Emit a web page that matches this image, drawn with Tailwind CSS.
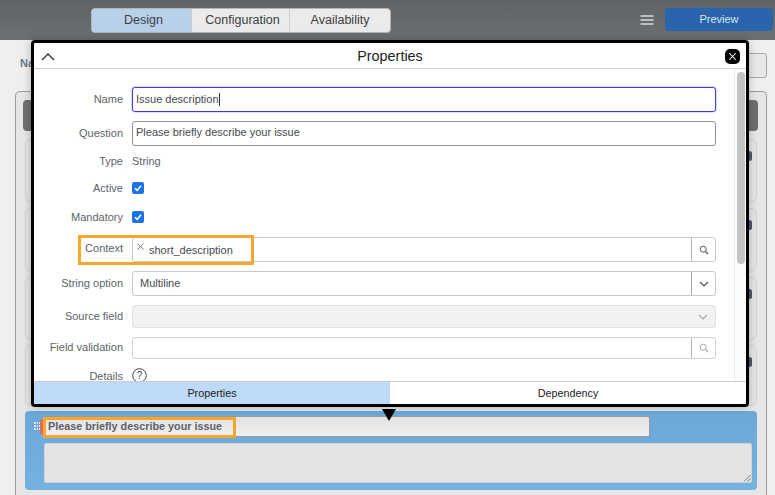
<!DOCTYPE html>
<html>
  <head>
    <meta charset="UTF-8" />
    <meta name="viewport" content="width=device-width, initial-scale=1.0" />
    <title>Properties</title>
    <script src="https://cdn.jsdelivr.net/npm/@tailwindcss/browser@4"></script>
  </head>
  <body class="relative w-[775px] h-[495px] overflow-hidden bg-[#efefef] font-['Liberation_Sans',Arial,sans-serif]">
    <!-- top bar -->
    <header class="relative h-[40px] bg-linear-to-b from-[#5f6365] to-[#6c7072] flex items-start">
      <div class="ml-[91px] mt-[8px] w-[300px] h-[25px] flex rounded-[4px] overflow-hidden border border-[#b5b5b5] text-[12.5px] text-[#3c4043] bg-[#ebebeb]">
        <div class="w-[99px] bg-[#b8d0ea] flex items-center justify-center pl-[4px]">Design</div>
        <div class="w-[99px] border-x border-[#cccccc] flex items-center justify-center pl-[4px]">Configuration</div>
        <div class="flex-1 flex items-center justify-center">Availability</div>
      </div>
      <svg class="ml-[249px] mt-[15px]" width="14" height="10" viewBox="0 0 14 10" fill="none" stroke="#d8dadb" stroke-width="1.4">
        <path d="M0.5 1H13.5M0.5 5H13.5M0.5 9H13.5" />
      </svg>
      <button type="button" class="ml-[11px] mt-[8px] w-[108px] h-[23px] rounded-[4px] bg-[#2a64ad] text-[#d9e4f2] text-[11px] font-medium">Preview</button>
    </header>

    <!-- form page behind the modal -->
    <main class="pl-[15px] pr-[8px] pt-[13px] h-[455px] flex flex-col">
      <div class="h-[25px] ml-[5px] text-[11px] font-bold text-[#6d7780] leading-[21px] flex justify-between">
        <span>Na</span>
        <div class="w-[32px] h-[25px] rounded-[3px] border border-[#a8a8a8] bg-[#e8e8e8]"></div>
      </div>
      <div class="mt-[13px] flex-1 rounded-t-[5px] border border-b-0 border-[#9c9c9c] bg-[#e6e6e6] px-[9px] pt-[8px] flex flex-col">
        <div class="h-[31px] -ml-[2px] -mr-[1px] rounded-[4px] bg-[#6d6f71]"></div>
        <div class="mt-[8px] h-[63px] rounded-[6px] border border-[#d2d2d2] relative"><span class="absolute right-[4px] top-[11px] w-[5px] h-[10px] rounded-full bg-[#4c5662]"></span></div>
        <div class="mt-[6px] h-[63px] rounded-[6px] border border-[#d2d2d2] relative"><span class="absolute right-[4px] top-[11px] w-[5px] h-[10px] rounded-full bg-[#4c5662]"></span></div>
        <div class="mt-[6px] h-[63px] rounded-[6px] border border-[#d2d2d2] relative"><span class="absolute right-[4px] top-[11px] w-[5px] h-[10px] rounded-full bg-[#4c5662]"></span></div>
        <div class="mt-[5px] h-[61px] rounded-[6px] border border-[#d2d2d2] relative"><span class="absolute right-[4px] top-[11px] w-[5px] h-[10px] rounded-full bg-[#4c5662]"></span></div>
        <!-- selected question -->
        <div class="relative mt-[5px] h-[79px] rounded-[4px] bg-linear-to-b from-[#6ba8d8] to-[#74b2e2] pl-[19px] pt-[5px]">
          <div class="absolute left-[9px] top-[11px] grid grid-cols-3 gap-[1px]">
            <i class="w-[1.5px] h-[2px] bg-[#d5e6f5]"></i><i class="w-[1.5px] h-[2px] bg-[#d5e6f5]"></i><i class="w-[1.5px] h-[2px] bg-[#d5e6f5]"></i>
            <i class="w-[1.5px] h-[2px] bg-[#d5e6f5]"></i><i class="w-[1.5px] h-[2px] bg-[#d5e6f5]"></i><i class="w-[1.5px] h-[2px] bg-[#d5e6f5]"></i>
            <i class="w-[1.5px] h-[2px] bg-[#d5e6f5]"></i><i class="w-[1.5px] h-[2px] bg-[#d5e6f5]"></i><i class="w-[1.5px] h-[2px] bg-[#d5e6f5]"></i>
          </div>
          <span class="absolute left-[15px] top-[9px] w-[3px] h-[14px] bg-[#e0685c]"></span>
          <div class="w-[606px] h-[21px] rounded-[2px] border border-[#9a9a9a] bg-linear-to-b from-[#e2e2e2] to-[#f0f0f0] pl-[3px] text-[10.8px] font-bold text-[#5b6168] leading-[19px]">Please briefly describe your issue</div>
          <div class="relative mt-[6px] w-[708px] h-[40px] rounded-[2px] border border-[#d2d2d2] bg-[#e4e4e4]">
            <svg class="absolute right-0 bottom-0" width="8" height="8" viewBox="0 0 8 8" stroke="#777" fill="none"><path d="M1 7.5L7.5 1M4.5 7.5L7.5 4.5" /></svg>
          </div>
          <!-- highlight on question label -->
          <div class="absolute left-[18px] top-[6px] w-[193px] h-[21px] border-[3px] border-[#f7a72b]"></div>
        </div>
      </div>
    </main>

    <!-- properties modal -->
    <section class="absolute left-[31px] top-[40px] w-[718px] h-[367px] rounded-[4px] border-[3px] border-black bg-white flex flex-col shadow-[0_0_8px_rgba(0,0,0,0.25)]">
      <div class="relative h-[26px] shrink-0 border-b border-[#cfcfd4] flex items-center justify-center pt-[2px] text-[14.4px] text-[#1c1c1c]">
        <svg class="absolute left-[7px] top-[10px]" width="14" height="8" viewBox="0 0 14 8" fill="none" stroke="#333" stroke-width="1.4"><path d="M1 7L7 1L13 7" /></svg>
        Properties
        <svg class="absolute right-[6px] top-[6px]" width="15" height="15" viewBox="0 0 15 15"><rect width="15" height="15" rx="5" fill="#000" /><path d="M4.2 4.2L10.8 10.8M10.8 4.2L4.2 10.8" stroke="#ddd" stroke-width="1.1" /></svg>
      </div>

      <div class="flex-1 flex min-h-0">
        <div class="w-[700px] shrink-0 overflow-hidden relative text-[11px] text-[#5c6369] pt-[18px]">
          <div class="flex items-center h-[25px]">
            <label class="w-[89px] shrink-0 text-right">Name</label>
            <div class="ml-[9px] w-[584px] h-[25px] rounded-[3px] border border-[#3a3fd0] shadow-[0_0_2px_#7a8cf0] flex items-center pl-[3px] text-[#444a50]">Issue description<span class="w-px h-[13px] bg-[#333]"></span></div>
          </div>
          <div class="flex items-center h-[25px] mt-[9px]">
            <label class="w-[89px] shrink-0 text-right">Question</label>
            <div class="ml-[9px] w-[584px] h-[25px] rounded-[3px] border border-[#8f8f8f] flex pl-[3px] leading-[20px] text-[#444a50]">Please briefly describe your issue</div>
          </div>
          <div class="flex items-center h-[16px] mt-[7px]">
            <label class="w-[89px] shrink-0 text-right">Type</label>
            <span class="ml-[9px]">String</span>
          </div>
          <div class="flex items-center h-[16px] mt-[11px]">
            <label class="w-[89px] shrink-0 text-right">Active</label>
            <svg class="ml-[9px]" width="12" height="12" viewBox="0 0 12 12"><rect width="12" height="12" rx="2" fill="#1a73e8" /><path d="M3 6.2L5.2 8.4L9 3.8" stroke="#fff" stroke-width="1.6" fill="none" /></svg>
          </div>
          <div class="flex items-center h-[16px] mt-[13px]">
            <label class="w-[89px] shrink-0 text-right">Mandatory</label>
            <svg class="ml-[9px]" width="12" height="12" viewBox="0 0 12 12"><rect width="12" height="12" rx="2" fill="#1a73e8" /><path d="M3 6.2L5.2 8.4L9 3.8" stroke="#fff" stroke-width="1.6" fill="none" /></svg>
          </div>
          <div class="relative flex items-center h-[25px] mt-[12px]">
            <label class="w-[89px] shrink-0 text-right -mt-[2px]">Context</label>
            <div class="ml-[9px] w-[584px] h-[25px] rounded-[3px] border border-[#c8c8c8] flex">
              <div class="flex-1 relative pl-[16px] leading-[24px] text-[#444a50]">
                <svg class="absolute left-[4px] top-[5px]" width="7" height="7" viewBox="0 0 7 7" stroke="#777" fill="none"><path d="M0.5 0.5L6.5 6.5M6.5 0.5L0.5 6.5" /></svg>
                short_description
              </div>
              <div class="w-[24px] border-l border-[#b5b5b5] flex items-center justify-center">
                <svg width="10" height="10" viewBox="0 0 10 10" fill="none" stroke="#555"><circle cx="4.2" cy="4.2" r="3" /><path d="M6.5 6.5L9 9" stroke-width="1.3" /></svg>
              </div>
            </div>
            <!-- highlight on context -->
            <div class="absolute left-[44px] top-[-2px] w-[176px] h-[30px] border-[3px] border-[#f7a72b]"></div>
          </div>
          <div class="flex items-center h-[25px] mt-[9px]">
            <label class="w-[89px] shrink-0 text-right">String option</label>
            <div class="ml-[9px] w-[584px] h-[25px] rounded-[3px] border border-[#c8c8c8] flex">
              <div class="flex-1 pl-[7px] leading-[23px] text-[#444a50]">Multiline</div>
              <div class="w-[24px] border-l border-[#a0a0a0] flex items-center justify-center">
                <svg width="10" height="6" viewBox="0 0 10 6" fill="none" stroke="#4a5560" stroke-width="1.2"><path d="M1 1L5 5L9 1" /></svg>
              </div>
            </div>
          </div>
          <div class="flex items-center h-[23px] mt-[9px]">
            <label class="w-[89px] shrink-0 text-right">Source field</label>
            <div class="ml-[9px] w-[584px] h-[23px] rounded-[3px] border border-[#e2e2e2] bg-[#f2f2f2] flex items-center justify-end pr-[7px]">
              <svg width="10" height="6" viewBox="0 0 10 6" fill="none" stroke="#a5a9ad" stroke-width="1.2"><path d="M1 1L5 5L9 1" /></svg>
            </div>
          </div>
          <div class="flex items-center h-[22px] mt-[9px]">
            <label class="w-[89px] shrink-0 text-right -mt-[2px]">Field validation</label>
            <div class="ml-[9px] w-[584px] h-[22px] rounded-[3px] border border-[#d2d2d2] flex">
              <div class="flex-1"></div>
              <div class="w-[24px] border-l border-[#b5b5b5] flex items-center justify-center">
                <svg width="10" height="10" viewBox="0 0 10 10" fill="none" stroke="#a8a8a8"><circle cx="4.2" cy="4.2" r="3" /><path d="M6.5 6.5L9 9" stroke-width="1.3" /></svg>
              </div>
            </div>
          </div>
          <div class="flex items-start h-[12px] mt-[10px]">
            <label class="w-[89px] shrink-0 text-right leading-[10px] mt-[2px]">Details</label>
            <svg class="ml-[9px] -mt-[1px]" width="15" height="15" viewBox="0 0 15 15" fill="none" stroke="#444"><circle cx="7.5" cy="7.5" r="6.8" /><text x="7.5" y="11" text-anchor="middle" font-size="10" fill="#444" stroke="none" font-family="Liberation Sans">?</text></svg>
          </div>
        </div>
        <!-- scrollbar -->
        <div class="w-[12px] shrink-0 border-l border-[#ededed] bg-[#fbfbfb] pt-[3px] pl-[2px] pr-[1px]">
          <div class="h-[192px] rounded-full bg-[#c4c4c4]"></div>
        </div>
      </div>

      <div class="h-[23px] shrink-0 border-t border-[#cfc9d8] flex text-[10.8px] text-[#222]">
        <div class="w-[356px] bg-[#bddbf8] flex items-center justify-center">Properties</div>
        <div class="flex-1 flex items-center justify-center">Dependency</div>
      </div>
    </section>
    <!-- pointer under the modal -->
    <div class="absolute left-[382px] top-[409px] w-0 h-0 border-x-[7px] border-x-transparent border-t-[12px] border-t-black"></div>
  </body>
</html>
